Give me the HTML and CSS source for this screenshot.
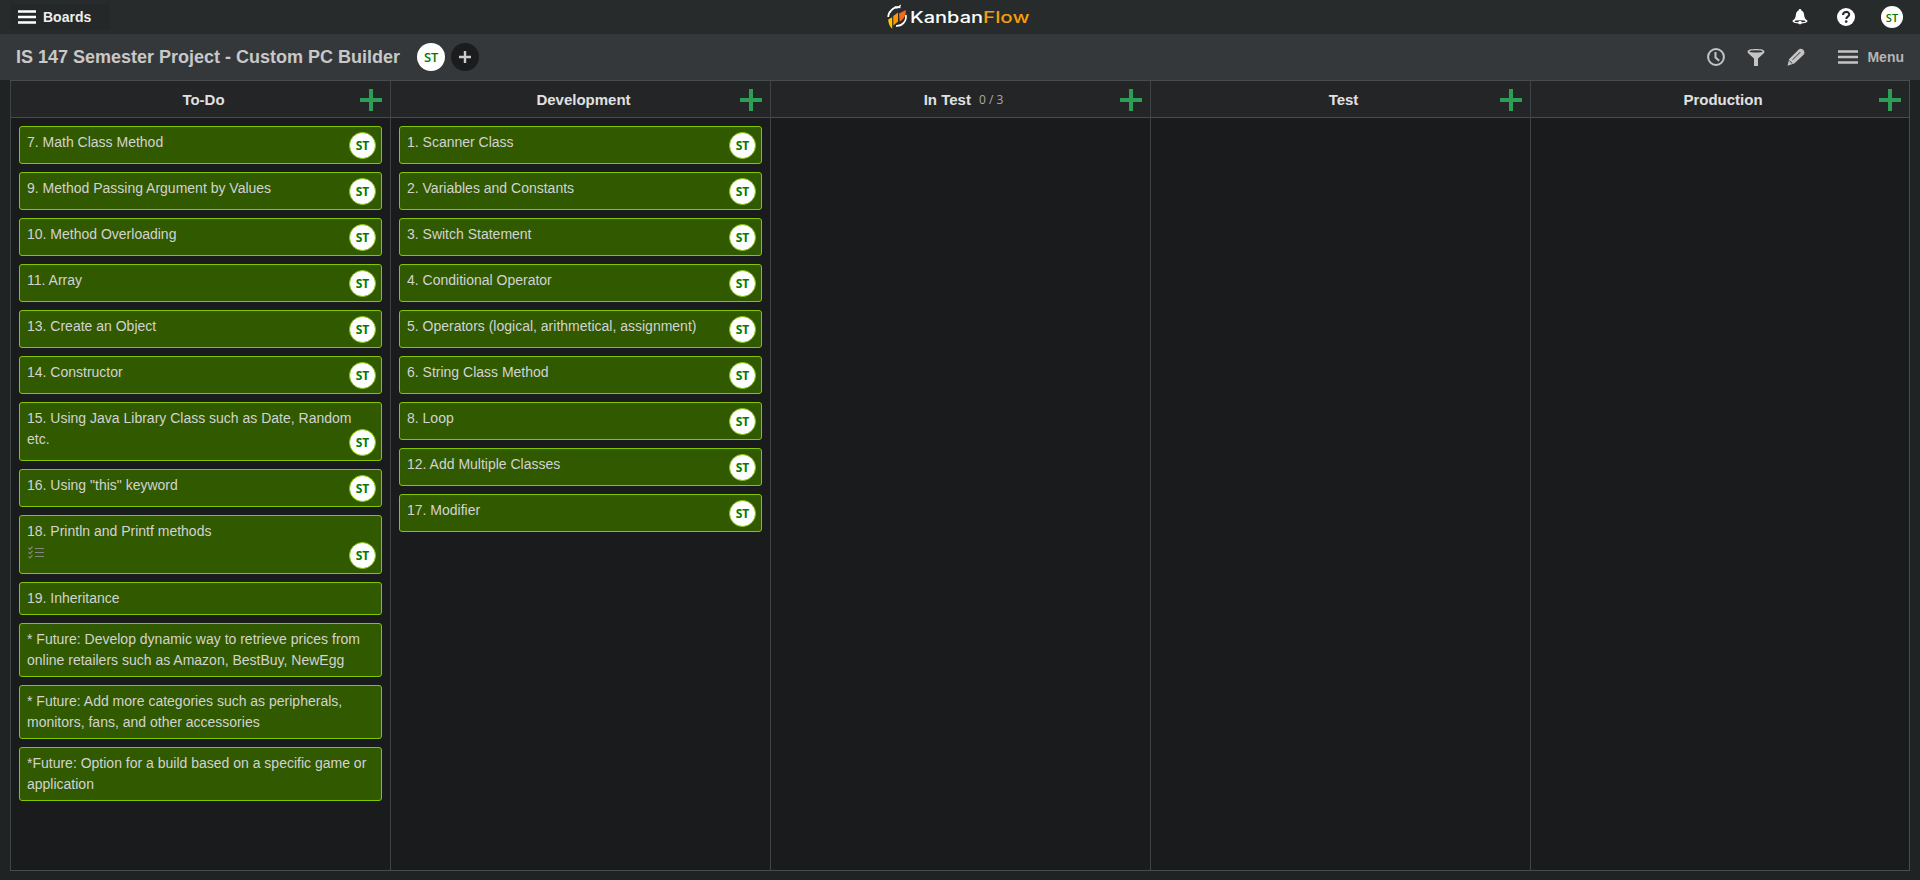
FILE: index.html
```
<!DOCTYPE html>
<html lang="en">
<head>
<meta charset="utf-8">
<title>KanbanFlow</title>
<link rel="stylesheet" href="styles.css">
</head>
<body>
<header class="topbar">
  <div class="boards"><svg width="18" height="14"><path d="M0 1.500h18M0 7h18M0 12.500h18" stroke="#fff" stroke-width="2.600"/></svg><span>Boards</span></div>
  <svg class="logo" width="144" height="28" viewBox="0 0 144 28">
    <path d="M4.200 7.500A9 9 0 0 0 1.200 14M13.500 4.500A9 9 0 0 0 4.200 7.500M18.800 12A9 9 0 0 1 9 22.800" fill="none" stroke="#fff" stroke-width="1.700"/>
    <path d="M6.500 4.200l2-1 2.500.6 2.500-2.300.5 1-1.800 2.500-3 .6z" fill="#fff"/>
    <path d="M1.200 16.500l4-2.200v11.500c-2.300-2-3.800-5-4-9.300z" fill="#ffc400"/>
    <path d="M6.300 13l4.700-3.500v9l-4.700 4z" fill="#f90"/>
    <path d="M12 10.500l6.800-3.500c.2 5-1.700 9.500-6.300 11.500z" fill="#f26a1b"/>
    <text x="23" y="19.500" class="logo-text" fill="#fff" textLength="73" lengthAdjust="spacingAndGlyphs">Kanban</text>
    <text x="96" y="19.500" class="logo-text" fill="#f59c0a" textLength="46.500" lengthAdjust="spacingAndGlyphs">Flow</text>
  </svg>
  <div class="top-icons">
    <svg width="16" height="16" viewBox="0 0 16 16"><path d="M8 0c.8 0 1.200.5 1.200 1.300C11.600 2.300 12 4.500 12.300 7c.2 2.300 1.500 3.500 3.200 4.700.5 1.500-3 2.700-7.500 2.700S0 13.200.5 11.700C2.200 10.500 3.500 9.300 3.700 7 4 4.500 4.400 2.300 6.800 1.300 6.800.5 7.200 0 8 0z" fill="#fff"/><ellipse cx="8" cy="12.300" rx="5.500" ry="1.100" fill="#272b2c"/><circle cx="8" cy="13.600" r="1.800" fill="#fff"/></svg>
    <svg width="18" height="18" viewBox="0 0 18 18"><circle cx="9" cy="9" r="9" fill="#fff"/><path d="M6 7c0-4 6.200-4 6.200-.6 0 2.200-2.900 2.100-2.900 4.500" fill="none" stroke="#272b2c" stroke-width="2.100"/><circle cx="9.200" cy="13.600" r="1.300" fill="#272b2c"/></svg>
    <span class="avatar avatar-top">ST</span>
  </div>
</header>
<div class="boardbar">
  <h1>IS 147 Semester Project - Custom PC Builder</h1>
  <span class="avatar avatar-board">ST</span>
  <span class="add-member"><svg width="12" height="12"><path d="M0 6h12M6 0v12" stroke="#ccc" stroke-width="2.400"/></svg></span>
  <div class="tools">
    <svg width="18" height="18" viewBox="0 0 18 18"><circle cx="9" cy="9" r="7.900" fill="none" stroke="#c4c4c4" stroke-width="2"/><path d="M8.500 4v5.500l3.700 3.300" fill="none" stroke="#c4c4c4" stroke-width="2"/></svg>
    <svg width="18" height="18" viewBox="0 0 18 18"><path d="M.5 3.500C.5 1.800 4 1 9 1s8.500.8 8.500 2.500c0 .7-.3 1.200-1 1.900L11 10.600V18H7v-7.400L1.500 5.400c-.7-.7-1-1.200-1-1.900z" fill="#c4c4c4"/><ellipse cx="9" cy="3.400" rx="6.600" ry="1.200" fill="#34383b"/></svg>
    <svg width="18" height="18" viewBox="0 0 18 18"><path d="M.5 17.700L2.200 11 11.500 1.700c2-2.200 6.800.2 5.800 3.800-.1.600-.6 1.100-1 1.500L7.300 15.600z" fill="#c4c4c4"/><path d="M5.600 11.800l7.800-7.800M2.300 12.700l2.900 2.700" stroke="#34383b" stroke-width="1"/></svg>
    <div class="menu"><svg width="20" height="14"><path d="M0 1.500h20M0 7h20M0 12.500h20" stroke="#c4c4c4" stroke-width="2.500"/></svg><span>Menu</span></div>
  </div>
</div>
<main class="board">
  <section class="column">
    <div class="column-head"><h2>To-Do</h2><i class="plus"></i></div>
    <div class="cards">
      <article class="card assigned">7. Math Class Method<span class="avatar">ST</span></article>
      <article class="card assigned">9. Method Passing Argument by Values<span class="avatar">ST</span></article>
      <article class="card assigned">10. Method Overloading<span class="avatar">ST</span></article>
      <article class="card assigned">11. Array<span class="avatar">ST</span></article>
      <article class="card assigned">13. Create an Object<span class="avatar">ST</span></article>
      <article class="card assigned">14. Constructor<span class="avatar">ST</span></article>
      <article class="card assigned">15. Using Java Library Class such as Date, Random etc.<span class="avatar">ST</span></article>
      <article class="card assigned">16. Using "this" keyword<span class="avatar">ST</span></article>
      <article class="card assigned">18. Println and Printf methods
        <div class="subtasks"><svg width="18" height="13" viewBox="0 0 18 13" fill="none" stroke="#858585"><path d="M7 2.500h9M7 6.500h9M7 10.500h9"/><path d="M.5 2l1.500 1.300L4.500.5M.5 6.300L2 7.600l2.500-2.800M.5 10.600L2 11.900l2.500-2.800" stroke-width="1.200"/></svg></div>
        <span class="avatar">ST</span></article>
      <article class="card">19. Inheritance</article>
      <article class="card">* Future: Develop dynamic way to retrieve prices from online retailers such as Amazon, BestBuy, NewEgg</article>
      <article class="card">* Future: Add more categories such as peripherals, monitors, fans, and other accessories</article>
      <article class="card">*Future: Option for a build based on a specific game or application</article>
    </div>
  </section>
  <section class="column">
    <div class="column-head"><h2>Development</h2><i class="plus"></i></div>
    <div class="cards">
      <article class="card assigned">1. Scanner Class<span class="avatar">ST</span></article>
      <article class="card assigned">2. Variables and Constants<span class="avatar">ST</span></article>
      <article class="card assigned">3. Switch Statement<span class="avatar">ST</span></article>
      <article class="card assigned">4. Conditional Operator<span class="avatar">ST</span></article>
      <article class="card assigned">5. Operators (logical, arithmetical, assignment)<span class="avatar">ST</span></article>
      <article class="card assigned">6. String Class Method<span class="avatar">ST</span></article>
      <article class="card assigned">8. Loop<span class="avatar">ST</span></article>
      <article class="card assigned">12. Add Multiple Classes<span class="avatar">ST</span></article>
      <article class="card assigned">17. Modifier<span class="avatar">ST</span></article>
    </div>
  </section>
  <section class="column">
    <div class="column-head"><h2>In Test</h2><span class="limit">0 / 3</span><i class="plus"></i></div>
  </section>
  <section class="column">
    <div class="column-head"><h2>Test</h2><i class="plus"></i></div>
  </section>
  <section class="column">
    <div class="column-head"><h2>Production</h2><i class="plus"></i></div>
  </section>
</main>
</body>
</html>
```
FILE: styles.css
```
* { box-sizing: border-box; }
body {
  margin: 0;
  height: 880px;
  display: flex;
  flex-direction: column;
  overflow: hidden;
  background: #1f2324;
  color: #d3d3d3;
  font: 14px/21px "Liberation Sans", Arial, sans-serif;
}
svg { display: block; flex: none; }
h1, h2 { margin: 0; }

.topbar {
  height: 34px;
  flex: none;
  display: grid;
  grid-template-columns: 1fr 144px 1fr;
  align-items: center;
  padding: 0 12px 0 10px;
  background: #272b2c;
}
.boards {
  display: flex;
  align-items: center;
  justify-self: start;
  gap: 7px;
  width: 100px;
  height: 26px;
  padding-left: 8px;
  border-radius: 3px;
  background: #242829;
  color: #eee;
  font-weight: bold;
}
.logo { align-self: start; margin-top: 3px; }
.logo-text { font: 500 16px Inter, "Liberation Sans", sans-serif; }
.top-icons {
  display: flex;
  align-items: center;
  justify-self: end;
  gap: 29px;
  padding-right: 5px;
}
.avatar {
  display: flex;
  align-items: center;
  justify-content: center;
  flex: none;
  border-radius: 50%;
  background: #fff;
  color: #007a00;
  font: 700 12px/1 "Open Sans", "Noto Sans", sans-serif;
}
.avatar-top { width: 22px; height: 22px; font-size: 11px; font-weight: 600; margin-left: -3px; }

.boardbar {
  height: 46px;
  flex: none;
  display: flex;
  align-items: center;
  padding: 0 16px;
  background: #34383b;
}
.boardbar h1 { font-size: 18px; line-height: 24px; color: #c8c8c8; }
.avatar-board { width: 28px; height: 28px; margin-left: 17px; font-size: 13px; font-weight: 600; }
.add-member {
  display: flex;
  align-items: center;
  justify-content: center;
  width: 28px;
  height: 28px;
  margin-left: 6px;
  border-radius: 50%;
  background: #1b1c1e;
}
.tools { display: flex; align-items: center; gap: 22px; margin-left: auto; }
.menu { display: flex; align-items: center; gap: 9px; margin-left: 11px; color: #b4b4b4; font-weight: bold; }

.board {
  display: grid;
  grid-template-columns: repeat(4, 380px) 1fr;
  width: 1900px;
  height: 791px;
  flex: none;
  margin-left: 10px;
  border: solid #474c4e;
  border-width: 1px 1px 1px 0;
  background: #1a1b1d;
}
.column { border-left: 1px solid #3f4345; min-width: 0; }
.column-head {
  display: flex;
  align-items: center;
  justify-content: center;
  position: relative;
  height: 37px;
  padding: 2px 0 0 6px;
  border-bottom: 1px solid #474c4e;
  background: #242527;
}
.column-head h2 { font-size: 15px; line-height: 20px; color: #e1e1e1; }
.limit { margin-left: 8px; font: 12px/20px "Open Sans", sans-serif; color: #aaa; }
.plus {
  position: absolute;
  right: 8px;
  top: 8px;
  width: 22px;
  height: 22px;
  background: linear-gradient(#2d9e56, #2d9e56) center / 22px 4px no-repeat,
              linear-gradient(#2d9e56, #2d9e56) center / 4px 22px no-repeat;
}
.cards { display: flex; flex-direction: column; gap: 8px; padding: 8px; }
.card {
  position: relative;
  padding: 5px 7px;
  border: 1px solid #84c600;
  border-radius: 3px;
  background: #315900;
}
.card.assigned { padding-bottom: 10px; }
.card .avatar {
  position: absolute;
  right: 5px;
  bottom: 4px;
  width: 27px;
  height: 27px;
  border: 1px solid #84c600;
}
.subtasks { height: 21px; padding: 4px 0 0 1px; }
```
